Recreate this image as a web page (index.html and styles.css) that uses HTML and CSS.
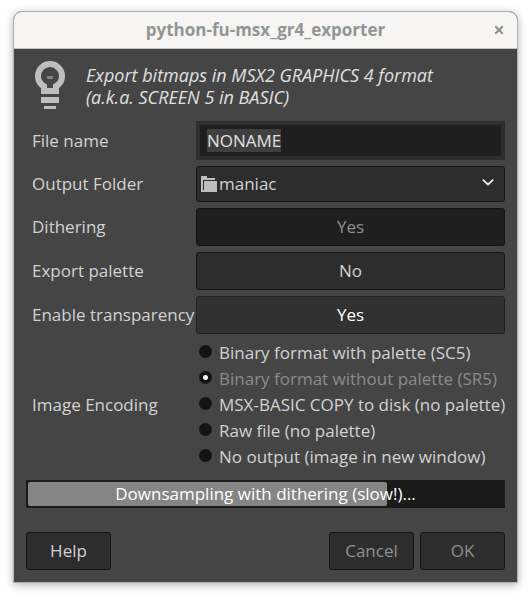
FILE: index.html
```html
<!DOCTYPE html>
<html lang="en">
<head>
<meta charset="utf-8">
<meta name="viewport" content="width=device-width, initial-scale=1">
<title>python-fu-msx_gr4_exporter</title>
<link rel="stylesheet" href="styles.css">
</head>
<body>
<main class="window">
  <header class="titlebar">
    <h1 class="title">python-fu-msx_gr4_exporter</h1>
    <button class="close" type="button" aria-label="Close">
      <svg width="10" height="10" viewBox="0 0 10 10"><path d="M1.3 1.3 8.7 8.7M8.7 1.3 1.3 8.7" stroke="#8b8e8f" stroke-width="2" fill="none"/></svg>
    </button>
  </header>
  <form class="content">
    <div class="intro">
      <svg class="bulb" width="48" height="48" viewBox="0 0 48 48" fill="#bebebe">
        <path fill-rule="evenodd" d="M24 0A15 15 0 0 0 9 15C9 20.500 11.500 24.500 15 27V33H33V27C36.500 24.500 39 20.500 39 15A15 15 0 0 0 24 0ZM24 6A9 9 0 0 1 33 15C33 19 30.500 21.500 27 23.500V27H21V23.500C17.500 21.500 15 19 15 15A9 9 0 0 1 24 6Z"/>
        <path d="M15 36h18v6H15zM18 45h12v3H18z"/>
        <path fill="#7e7e7e" d="M21 15h6v3h-6z"/>
      </svg>
      <p class="blurb">Export bitmaps in MSX2 GRAPHICS 4 format<br>(a.k.a. SCREEN 5 in BASIC)</p>
    </div>
    <div class="fields">
      <label class="name" for="filename">File name</label>
      <div class="entry"><input id="filename" type="text" value="NONAME"></div>

      <label class="name" for="folder">Output Folder</label>
      <div class="combo">
        <svg class="folder" width="16" height="16" viewBox="0 0 16 16" fill="#bebebe"><path d="M0 0H6V2H14V4H2V14H1V16H0Z"/><path d="M3 5H16V16H1V14H3Z"/></svg>
        <select id="folder"><option>maniac</option></select>
        <svg class="arrow" width="12" height="10" viewBox="0 0 12 10"><path d="M.7.7 6 5.500 11.300.7" stroke="#eee" stroke-width="1.700" fill="none"/></svg>
      </div>

      <label class="name" for="dither">Dithering</label>
      <button class="btn pressed" id="dither" type="button">Yes</button>

      <label class="name" for="palette">Export palette</label>
      <button class="btn" id="palette" type="button">No</button>

      <label class="name" for="transparency">Enable transparency</label>
      <button class="btn hover" id="transparency" type="button">Yes</button>

      <span class="name" id="encoding">Image Encoding</span>
      <div class="radios" role="radiogroup" aria-labelledby="encoding">
        <label class="radio"><input type="radio" name="enc"><span>Binary format with palette (SC5)</span></label>
        <label class="radio chosen"><input type="radio" name="enc" checked><span>Binary format without palette (SR5)</span></label>
        <label class="radio"><input type="radio" name="enc"><span>MSX-BASIC COPY to disk (no palette)</span></label>
        <label class="radio"><input type="radio" name="enc"><span>Raw file (no palette)</span></label>
        <label class="radio"><input type="radio" name="enc"><span>No output (image in new window)</span></label>
      </div>
    </div>
    <div class="progress" role="progressbar" aria-label="Export progress" aria-valuenow="76" aria-valuemin="0" aria-valuemax="100">
      <div class="bar" style="width:75.600%"></div>
      <span class="status">Downsampling with dithering (slow!)…</span>
    </div>
    <div class="actions">
      <button class="btn action help" type="button">Help</button>
      <button class="btn action dim" type="button">Cancel</button>
      <button class="btn action dim" type="button">OK</button>
    </div>
  </form>
</main>
<script src="script.js"></script>
</body>
</html>
```
FILE: styles.css
```css
* { box-sizing: border-box; }
body {
  margin: 0;
  padding: 11px 13px 16px;
  background: #fff;
  color: #d2d2d2;
  font: 17px/22px "Open Sans", "Noto Sans", sans-serif;
}
button, input, select { font: inherit; color: inherit; }
.window {
  border: 1px solid #b0b0b0;
  border-radius: 9px 9px 0 0;
  background: #454545;
  box-shadow: 0 2px 8px rgba(0, 0, 0, .3);
  overflow: hidden;
}
.titlebar {
  display: grid;
  grid-template-columns: 36px 1fr 36px;
  align-items: center;
  height: 37px;
  background: #f6f5f4;
  border-bottom: 1px solid #c9c5c1;
}
.title {
  grid-column: 2;
  margin: 0;
  text-align: center;
  font-size: 17px;
  font-weight: 700;
  color: #929595;
}
.close {
  display: grid;
  place-items: center;
  height: 34px;
  padding: 0;
  border: 0;
  background: none;
}
.content { padding: 12px; }
.intro { display: flex; gap: 12px; }
.bulb { flex: none; }
.blurb {
  margin: 3px 0 0;
  font-size: 18px;
  font-style: italic;
  color: #e0e0e0;
  white-space: nowrap;
}
.fields {
  display: grid;
  grid-template-columns: 164px minmax(0, 1fr);
  row-gap: 6px;
  align-items: center;
  margin-top: 10px;
  padding-left: 6px;
}
.intro { height: 50px; }
.name { white-space: nowrap; }
.entry { height: 39px; padding: 4px; background: #2e2e2e; }
.entry input {
  display: block;
  width: 100%;
  height: 31px;
  padding: 0 7px;
  border: 0;
  outline: 0;
  background: #1f1f1f;
  color: #e0e0e0;
}
.entry input::selection { background: #3f3f3f; color: #e0e0e0; }
.combo {
  display: flex;
  align-items: center;
  height: 36px;
  padding: 0 10px 0 4px;
  border: 1px solid #151515;
  border-radius: 3px;
  background: #2d2d2d;
}
.combo select {
  flex: 1;
  min-width: 0;
  padding: 0 0 0 2px;
  border: 0;
  outline: 0;
  appearance: none;
  background: none;
}
.folder, .arrow { flex: none; }
.btn {
  height: 38px;
  padding: 0;
  border: 1px solid #151515;
  border-radius: 3px;
  background: #2d2d2d;
}
.pressed { background: #1f1f1f; color: #929292; }
.hover { background: #313131; border-color: #202020; color: #fff; }
.dim { color: #8f8f8f; }
.radio { display: flex; align-items: center; gap: 7px; height: 26px; white-space: nowrap; }
.radio input {
  flex: none;
  appearance: none;
  width: 13px;
  height: 13px;
  margin: 0 0 3px 3px;
  border-radius: 50%;
  background: #141414;
}
.radio input:checked { background: radial-gradient(circle, #fff 2px, #141414 3px); }
.chosen { color: #8b8b8b; }
.progress {
  display: grid;
  align-items: center;
  height: 28px;
  margin-top: 10px;
  padding: 2px;
  background: #1a1a1a;
}
.bar { grid-area: 1 / 1; height: 24px; border-radius: 2px; background: #858585; }
.status { grid-area: 1 / 1; text-align: center; color: #fff; }
.actions { display: flex; gap: 6px; margin-top: 24px; }
.action { width: 85px; }
.help { margin-right: auto; }
```
FILE: script.js
```js
const field = document.getElementById("filename");
field.focus();
field.select();
```
